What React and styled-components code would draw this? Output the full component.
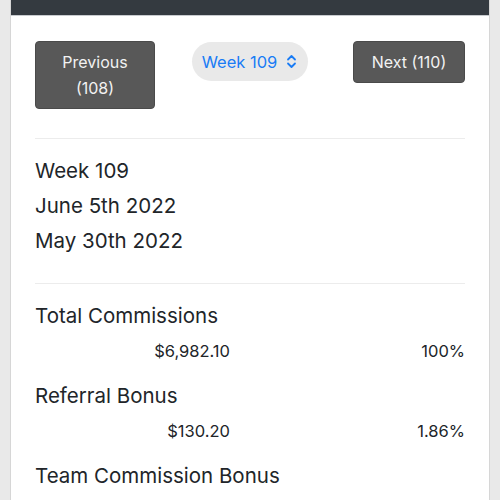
import React from "react";
import styled, { createGlobalStyle } from "styled-components";

const GlobalStyle = createGlobalStyle`
  html, body {
    margin: 0;
    padding: 0;
    background: #e9e9e9;
    font-family: "Inter", "Liberation Sans", sans-serif;
    color: #212529;
  }
`;

const Card = styled.div`
  margin: 0 10px;
  height: 500px;
  overflow: hidden;
  background: #fff;
  border-left: 1px solid #d6d6d6;
  border-right: 1px solid #d6d6d6;
  box-sizing: border-box;
`;

const TopBar = styled.div`
  height: 15px;
  background: #343a40;
  border-bottom: 1px solid #c8cbcf;
`;

const Body = styled.div`
  padding: 25px 24px 0;
`;

const Nav = styled.div`
  display: grid;
  grid-template-columns: 1fr 1fr 1fr;
  align-items: start;
  padding-bottom: 29px;
  border-bottom: 1px solid #ececec;
`;

const NavButton = styled.button`
  justify-self: ${(p) => p.$side};
  width: ${(p) => p.$width}px;
  background: #585858;
  color: #f2f2f2;
  border: 1px solid #4a4a4a;
  border-radius: 4px;
  font-family: inherit;
  font-size: 16px;
  line-height: 26px;
  padding: 7px 10px;
  text-align: center;
`;

const WeekSelect = styled.div`
  justify-self: center;
  display: flex;
  align-items: center;
  gap: 9px;
  height: 39px;
  margin-top: 1px;
  padding: 0 11px 0 10px;
  border-radius: 20px;
  background: #e9e9e9;
  color: #1a7cf5;
  font-size: 16.5px;
  white-space: nowrap;
`;

const Dates = styled.div`
  padding: 14px 0 25px;
  border-bottom: 1px solid #ececec;
`;

const DateLine = styled.div`
  font-size: 20.5px;
  line-height: 35px;
`;

const Stats = styled.div`
  padding-top: 16px;
`;

const StatTitle = styled.div`
  font-size: 20.5px;
  line-height: 32px;
`;

const StatRow = styled.div`
  display: grid;
  grid-template-columns: 195px 1fr;
  font-size: 16.5px;
  line-height: 38px;
  margin-bottom: 10px;
  text-align: right;
`;

const Chevrons = () => (
  <svg width="11" height="15" viewBox="0 0 11 15" fill="none">
    <path d="M2 5.5 L5.5 2 L9 5.5 M2 9.5 L5.5 13 L9 9.5" stroke="#1a7cf5" strokeWidth="1.8" strokeLinecap="round" strokeLinejoin="round" />
  </svg>
);

const stats = [
  { title: "Total Commissions", amount: "$6,982.10", pct: "100%" },
  { title: "Referral Bonus", amount: "$130.20", pct: "1.86%" },
  { title: "Team Commission Bonus" },
];

export default function App() {
  return (
    <>
      <GlobalStyle />
      <Card>
        <TopBar />
        <Body>
          <Nav>
            <NavButton $side="start" $width={120}>
              Previous
              <br />
              (108)
            </NavButton>
            <WeekSelect>
              Week 109 <Chevrons />
            </WeekSelect>
            <NavButton $side="end" $width={112}>
              Next (110)
            </NavButton>
          </Nav>
          <Dates>
            <DateLine>Week 109</DateLine>
            <DateLine>June 5th 2022</DateLine>
            <DateLine>May 30th 2022</DateLine>
          </Dates>
          <Stats>
            {stats.map((s) => (
              <div key={s.title}>
                <StatTitle>{s.title}</StatTitle>
                {s.amount && (
                  <StatRow>
                    <span>{s.amount}</span>
                    <span>{s.pct}</span>
                  </StatRow>
                )}
              </div>
            ))}
          </Stats>
        </Body>
      </Card>
    </>
  );
}
